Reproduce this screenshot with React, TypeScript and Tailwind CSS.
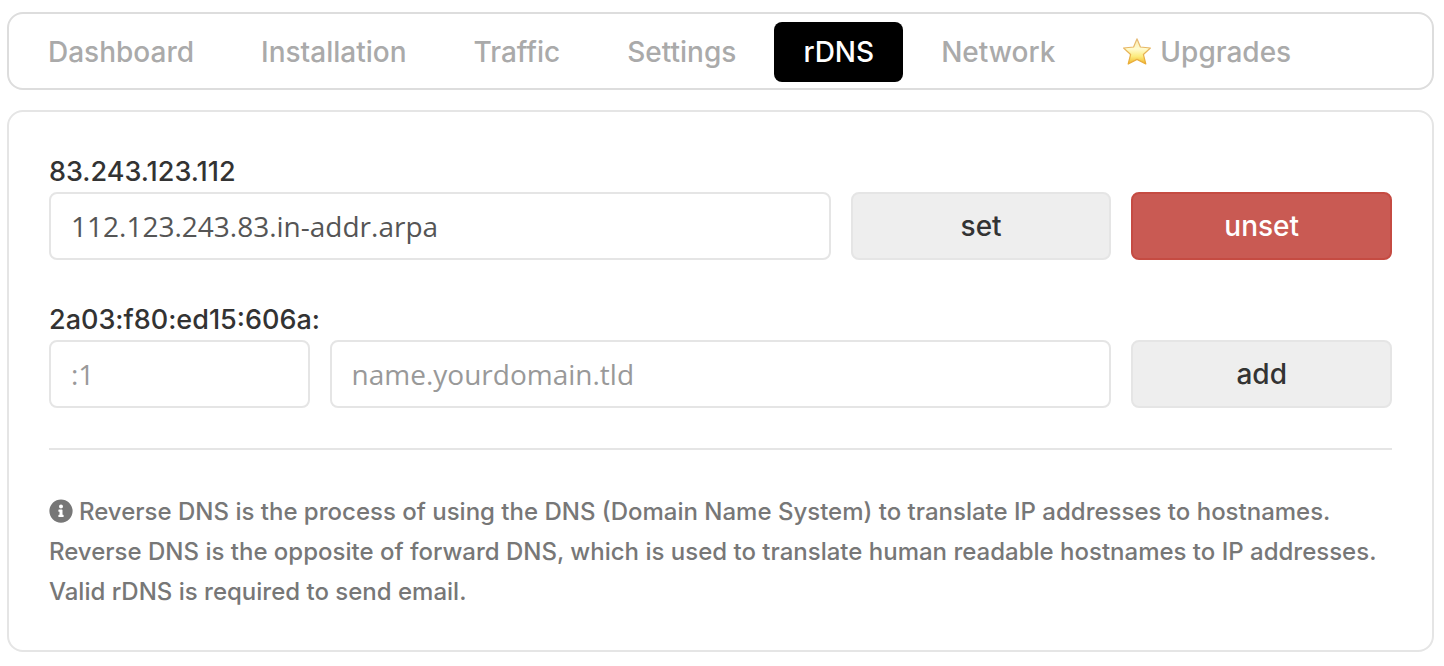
import { FaInfoCircle } from "react-icons/fa"
import clsx from "clsx"

const tabs = ["Dashboard", "Installation", "Traffic", "Settings", "rDNS", "Network", "Upgrades"]

export default function App() {
    return (
        <div className="bg-white py-3 pr-[10px] pl-[7px] font-['Inter',sans-serif] text-[28px] font-medium text-[#333]">
            <Navbar/>
            <main className="mt-5 rounded-2xl border-2 border-[#e5e5e5] px-10 pt-10 pb-[38px]">
                <Ipv4Form/>
                <Ipv6Form/>
                <hr className="mt-10 mb-[42px] border-t-2 border-[#e5e5e5]"/>
                <Info/>
            </main>
        </div>
    )
}

function Navbar() {
    return (
        <nav className="flex gap-[9px] rounded-2xl border-2 border-[#ddd] px-[10px] pt-2 pb-[6px]">
            {tabs.map((tab) => (
                <a
                    key={tab}
                    href="#"
                    className={clsx(
                        "flex h-[60px] items-center gap-2 rounded-lg px-[29px]",
                        tab === "rDNS" ? "bg-black text-white" : "text-[#aaa]"
                    )}
                >
                    {tab === "Upgrades" && <Star/>}
                    {tab}
                </a>
            ))}
        </nav>
    )
}

function Star() {
    return (
        <svg width="30" height="30" viewBox="0 0 30 30" aria-hidden="true">
            <defs>
                <linearGradient id="star" x1="0" y1="0" x2="0" y2="1">
                    <stop offset="0" stopColor="#fbe9a8"/>
                    <stop offset="0.4" stopColor="#fffbd0"/>
                    <stop offset="0.7" stopColor="#fceb7c"/>
                    <stop offset="1" stopColor="#f0b428"/>
                </linearGradient>
                <linearGradient id="star-edge" x1="0" y1="0" x2="0" y2="1">
                    <stop offset="0" stopColor="#e6bd7c"/>
                    <stop offset="1" stopColor="#e9ab35"/>
                </linearGradient>
            </defs>
            <path
                d="M15 1.8 L18.4 10 L28.4 11 L21.4 17.5 L23.8 27 L15 22.4 L6.2 27 L8.6 17.5 L1.6 11 L11.6 10 Z"
                fill="url(#star)"
                stroke="url(#star-edge)"
                strokeWidth="1.2"
                strokeLinejoin="round"
            />
        </svg>
    )
}

function Ipv4Form() {
    return (
        <form>
            <label htmlFor="ipv4" className="block h-10 text-[27px] leading-10">83.243.123.112</label>
            <div className="grid grid-cols-[3fr_1fr_1fr] gap-5">
                <Field id="ipv4" defaultValue="112.123.243.83.in-addr.arpa"/>
                <Button label="set"/>
                <Button label="unset" danger/>
            </div>
        </form>
    )
}

function Ipv6Form() {
    return (
        <form className="mt-10">
            <label htmlFor="ipv6" className="block h-10 text-[27px] leading-10">2a03:f80:ed15:606a:</label>
            <div className="grid grid-cols-[1fr_3fr_1fr] gap-5">
                <Field id="ipv6" placeholder=":1"/>
                <Field id="hostname" placeholder="name.yourdomain.tld" aria-label="Hostname"/>
                <Button label="add"/>
            </div>
        </form>
    )
}

function Field(props: React.InputHTMLAttributes<HTMLInputElement>) {
    return (
        <input
            type="text"
            className="h-[68px] w-full min-w-0 rounded-lg border-2 border-[#e5e5e5] bg-white px-5 font-['Open_Sans',sans-serif] font-normal text-[#555] outline-none placeholder:text-[#999]"
            {...props}
        />
    )
}

function Button({ label, danger }: { label: string; danger?: boolean }) {
    return (
        <button
            type="button"
            className={clsx(
                "h-[68px] rounded-lg border-2",
                danger ? "border-[#c54b42] bg-[#c95a53] text-white" : "border-[#e5e5e5] bg-[#eee]"
            )}
        >
            {label}
        </button>
    )
}

function Info() {
    return (
        <p className="text-2xl leading-10 text-[#777]">
            <FaInfoCircle className="mr-[6px] inline size-6 align-[-3px]"/>
            Reverse DNS is the process of using the DNS (Domain Name System) to translate IP addresses to hostnames.
            Reverse DNS is the opposite of forward DNS, which is used to translate human readable hostnames to IP addresses.
            Valid rDNS is required to send email.
        </p>
    )
}
